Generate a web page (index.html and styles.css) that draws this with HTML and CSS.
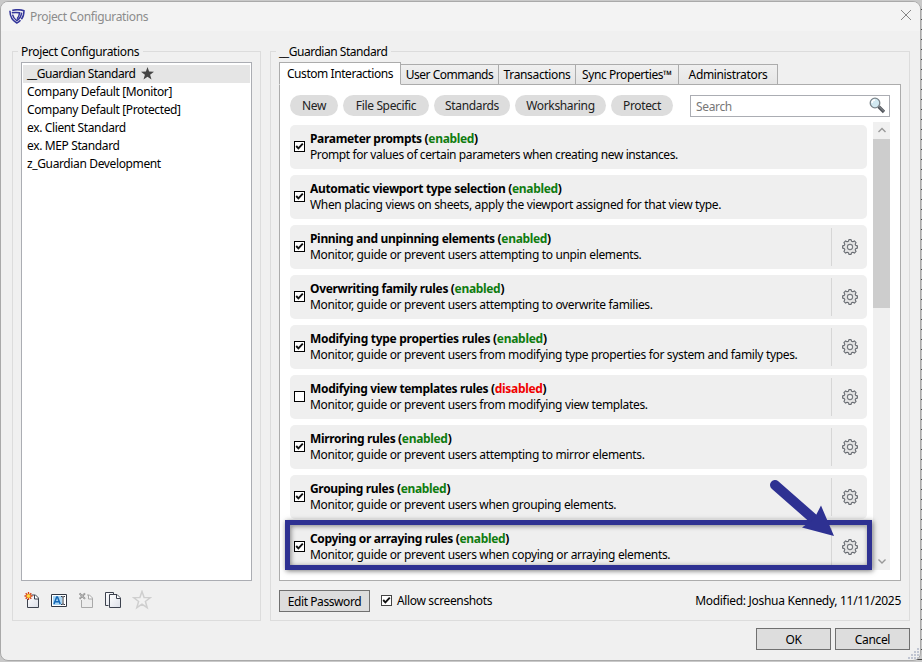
FILE: index.html
```html
<!DOCTYPE html>
<html lang="en">
<head>
<meta charset="utf-8">
<title>Project Configurations</title>
<link rel="stylesheet" href="styles.css">
</head>
<body>
<svg class="defs" width="0" height="0">
  <defs>
    <linearGradient id="paper" x1="0" y1="0" x2="1" y2="1"><stop offset="0" stop-color="#fff"/><stop offset="1" stop-color="#dcdfe8"/></linearGradient>
    <symbol id="gear" viewBox="0 0 16 16">
      <path d="M6.4 2.3 6.9.6h2.2l.5 1.7 1.2.5 1.6-.9 1.7 1.7-.9 1.6.5 1.2 1.7.5v2.2l-1.7.5-.5 1.2.9 1.6-1.7 1.7-1.6-.9-1.2.5-.5 1.7H6.9l-.5-1.7-1.2-.5-1.6.9-1.7-1.7.9-1.6-.5-1.2L.6 9.1V6.9l1.7-.5.5-1.2-.9-1.6 1.7-1.7 1.6.9z" fill="#e4e4e4" stroke="#696d73" stroke-width="1.1" stroke-linejoin="round"/>
      <circle cx="8" cy="8" r="2.6" fill="#f3f3f3" stroke="#777b80" stroke-width="1.1"/>
    </symbol>
    <symbol id="tick" viewBox="0 0 9 9"><path d="M1.200 4 3.400 6.300 7.800 1.700" fill="none" stroke="#111" stroke-width="1.900"/></symbol>
  </defs>
</svg>
<main class="window">
  <header class="titlebar">
    <svg class="logo" width="16" height="15" viewBox="0 0 16 15"><g fill="none" stroke="#34369a" stroke-width="1.500"><path d="M3.200 1.500C6 .6 11 .5 15 1.700c0 3.500-.8 6.300-2.600 8.600"/><path d="M.9 1.800C1 6.800 3 11.500 7.800 14c1.500-.7 2.700-1.700 3.700-2.800"/><path d="M2.800 3.800c2.700-.5 5.300-.5 7.800 0-.2 2.300-1 4.300-2.500 6"/><path d="M3.500 5.700c.5 2.200 2 4.400 4.300 5.900 2.700-1.900 4.500-4.500 4.800-8"/></g></svg>
    <span class="caption">Project Configurations</span>
    <svg class="close" width="12" height="12" viewBox="0 0 12 12"><path d="M1 1l10 10M11 1 1 11" stroke="#858585" fill="none"/></svg>
  </header>
  <div class="columns">
    <section class="group group-list">
      <h2 class="legend">Project Configurations</h2>
      <ul class="list">
        <li class="selected"><span>__Guardian Standard</span><svg width="13" height="13" viewBox="0 0 13 13"><path d="M6.500 0 8.100 4.600 13 4.700 9.100 7.700 10.500 12.500 6.500 9.700 2.500 12.500 3.900 7.700 0 4.700 4.900 4.600z" fill="#454545"/></svg></li>
        <li><span>Company Default [Monitor]</span></li>
        <li><span>Company Default [Protected]</span></li>
        <li><span>ex. Client Standard</span></li>
        <li><span>ex. MEP Standard</span></li>
        <li><span>z_Guardian Development</span></li>
      </ul>
      <div class="tools">
        <svg width="16" height="17" viewBox="0 0 16 17"><path d="M3.500 7v8.500h11V6l-3-3H7.500" fill="url(#paper)" stroke="#3d424e"/><path d="M10.500 3v4h4" fill="#fff" stroke="#3d424e"/><path d="M4.500 0v8M.5 4h8M1.700 1.200l5.600 5.600M7.300 1.200 1.700 6.800" stroke="#d43a16" stroke-width="1.300"/><circle cx="4.500" cy="4" r="1.900" fill="#ffe04a" stroke="#ec941c" stroke-width=".7"/></svg>
        <svg width="16" height="17" viewBox="0 0 16 17"><path d="M.5 2.500h15v12H.5z" fill="#fff" stroke="#303642"/><path d="M2 4h9v9H2z" fill="#a8d5f4"/><path d="m3 12 2.700-7h.8l2.700 7M4 9.800h4.200" fill="none" stroke="#1667b3" stroke-width="1.500"/><path d="M10 4.500h1.200l.8.700.8-.7H14M10 12.500h1.200l.8-.7.800.7H14M12 5v7" fill="none" stroke="#303642"/></svg>
        <svg width="16" height="17" viewBox="0 0 16 17"><path d="M3.500 8v7.500h11V6l-3-3H9" fill="#ededed" stroke="#a9a9a9"/><path d="M10.500 3v4h4" fill="#f6f6f6" stroke="#a9a9a9"/><path d="m1.500 1.300 5.500 5.500M7 1.300 1.500 6.800" stroke="#888" stroke-width="1.900"/><path d="m1.500 1.300 5.500 5.500M7 1.300 1.500 6.800" stroke="#ddd" stroke-width=".6"/></svg>
        <svg width="16" height="17" viewBox="0 0 16 17"><path d="M3.500 13.500h-3V.5h8v2" fill="url(#paper)" stroke="#3d424e"/><path d="M4.500 2.500h7.500l3.500 3.500v9.500h-11z" fill="url(#paper)" stroke="#3d424e"/><path d="M11.500 3v3.500h4" fill="#fff" stroke="#3d424e"/></svg>
        <svg class="star" width="20" height="20" viewBox="0 0 20 20"><path d="m10 1.500 2.100 6 6.200.1-4.900 3.900 1.800 6.200L10 14.200l-5.200 3.500 1.800-6.200-4.900-3.900 6.200-.1z" fill="#f2f2f2" stroke="#cfcfcf" stroke-width="1.500"/></svg>
      </div>
    </section>
    <section class="group group-detail">
      <h2 class="legend legend-tight">__Guardian Standard</h2>
      <nav class="tabs">
        <span class="tab tab-active">Custom Interactions</span>
        <span class="tab tab-commands">User Commands</span>
        <span class="tab tab-transactions">Transactions</span>
        <span class="tab tab-sync">Sync Properties™</span>
        <span class="tab tab-admin">Administrators</span>
      </nav>
      <div class="panel">
        <div class="filters">
          <span class="pill pill-new">New</span>
          <span class="pill pill-file">File Specific</span>
          <span class="pill pill-standards">Standards</span>
          <span class="pill pill-work">Worksharing</span>
          <span class="pill pill-protect">Protect</span>
          <div class="search"><span>Search</span><svg width="17" height="17" viewBox="0 0 17 17"><path d="m9.500 9.500 5.500 5.500" stroke="#50545a" stroke-width="3.200"/><path d="m9.500 9 5.500 5.500" stroke="#9ba0a5" stroke-width=".9"/><circle cx="6" cy="6" r="4.800" fill="#d2e9f1" stroke="#7b858b" stroke-width="1.300"/><path d="M3 6a3 3 0 0 1 3-3" fill="none" stroke="#fff" stroke-width="1.400"/></svg></div>
        </div>
        <div class="scroller">
          <div class="rules">
            <article class="rule"><i class="box"><svg><use href="#tick"/></svg></i><div class="copy"><h3>Parameter prompts (<em>enabled</em>)</h3><p class="tight">Prompt for values of certain parameters when creating new instances.</p></div></article>
            <article class="rule"><i class="box"><svg><use href="#tick"/></svg></i><div class="copy"><h3>Automatic viewport type selection (<em>enabled</em>)</h3><p>When placing views on sheets, apply the viewport assigned for that view type.</p></div></article>
            <article class="rule"><i class="box"><svg><use href="#tick"/></svg></i><div class="copy"><h3>Pinning and unpinning elements (<em>enabled</em>)</h3><p>Monitor, guide or prevent users attempting to unpin elements.</p></div><div class="settings"><svg><use href="#gear"/></svg></div></article>
            <article class="rule"><i class="box"><svg><use href="#tick"/></svg></i><div class="copy"><h3>Overwriting family rules (<em>enabled</em>)</h3><p>Monitor, guide or prevent users attempting to overwrite families.</p></div><div class="settings"><svg><use href="#gear"/></svg></div></article>
            <article class="rule"><i class="box"><svg><use href="#tick"/></svg></i><div class="copy"><h3 class="loose">Modifying type properties rules (<em>enabled</em>)</h3><p>Monitor, guide or prevent users from modifying type properties for system and family types.</p></div><div class="settings"><svg><use href="#gear"/></svg></div></article>
            <article class="rule"><i class="box"></i><div class="copy"><h3>Modifying view templates rules (<em class="off">disabled</em>)</h3><p>Monitor, guide or prevent users from modifying view templates.</p></div><div class="settings"><svg><use href="#gear"/></svg></div></article>
            <article class="rule"><i class="box"><svg><use href="#tick"/></svg></i><div class="copy"><h3>Mirroring rules (<em>enabled</em>)</h3><p>Monitor, guide or prevent users attempting to mirror elements.</p></div><div class="settings"><svg><use href="#gear"/></svg></div></article>
            <article class="rule"><i class="box"><svg><use href="#tick"/></svg></i><div class="copy"><h3>Grouping rules (<em>enabled</em>)</h3><p>Monitor, guide or prevent users when grouping elements.</p></div><div class="settings"><svg><use href="#gear"/></svg></div></article>
            <article class="rule marked"><i class="box"><svg><use href="#tick"/></svg></i><div class="copy"><h3>Copying or arraying rules (<em>enabled</em>)</h3><p>Monitor, guide or prevent users when copying or arraying elements.</p></div><div class="settings"><svg><use href="#gear"/></svg></div>
              <div class="highlight"></div>
              <svg class="arrow" viewBox="0 0 70 62"><path d="M7 10 48 46" stroke="#2e3192" stroke-width="10" stroke-linecap="round"/><path d="M66 61 34 52.500l12-8.500 7-13.500z" fill="#2e3192"/></svg>
            </article>
          </div>
          <div class="scrollbar"><svg width="17" height="17" viewBox="0 0 17 17"><path d="m5.500 10 3.500-3.500 3.500 3.500" fill="none" stroke="#999" stroke-width="1.400"/></svg><div class="thumb"></div><svg class="down" width="17" height="17" viewBox="0 0 17 17"><path d="m5.500 6.500 3.500 3.500 3.500-3.500" fill="none" stroke="#999" stroke-width="1.400"/></svg></div>
        </div>
      </div>
      <footer class="meta">
        <span class="button edit">Edit Password</span>
        <i class="box small"><svg><use href="#tick"/></svg></i>
        <span class="allow">Allow screenshots</span>
        <span class="modified">Modified: Joshua Kennedy, 11/11/2025</span>
      </footer>
    </section>
  </div>
  <div class="actions"><span class="button">OK</span><span class="button">Cancel</span></div>
  <svg class="grip" width="11" height="11" viewBox="0 0 11 11"><path d="M9 0h2v2H9zM6 3h2v2H6zM9 3h2v2H9zM3 6h2v2H3zM6 6h2v2H6zM9 6h2v2H9zM0 9h2v2H0zM3 9h2v2H3zM6 9h2v2H6zM9 9h2v2H9z" fill="#c0c5d1"/></svg>
</main>
</body>
</html>
```
FILE: styles.css
```css
* { box-sizing: border-box; }
body { margin: 0; width: 922px; height: 662px; overflow: hidden; padding: 1px 1px 1px 0; font: 12px/16px "Noto Sans", sans-serif; letter-spacing: -0.35px; color: #000; background: linear-gradient(90deg, #c9c9c9 0 50%, transparent 50%), repeating-linear-gradient(#c9c9c9 0 9px, #444 9px 10px); }
h2, h3, p, ul { margin: 0; padding: 0; font-size: inherit; font-weight: normal; white-space: nowrap; }
svg { display: block; flex: none; }
.defs { position: absolute; }
.window { position: relative; width: 921px; height: 660px; border: 1px solid #a9a9a9; border-radius: 8px; background: #f0f0f0; overflow: hidden; display: flex; flex-direction: column; }
.titlebar { height: 29px; flex: none; background: #f3f3f3; display: flex; align-items: center; padding: 0 8px; color: #8c8c8c; }
.caption { margin-left: 5px; }
.close { margin-left: auto; margin-top: -3px; }
.columns { display: flex; gap: 9px; padding: 20px 0 0 11px; }
.group { height: 570px; border: 1px solid #dcdcdc; padding: 0 8px; }
.group-list { width: 249px; }
.group-detail { width: 640px; }
.legend { width: max-content; height: 16px; margin: -8px 0 0 -3px; padding: 0 4px 0 3px; background: #f0f0f0; }
.legend-tight { letter-spacing: -0.47px; }
.list { height: 519px; margin-top: 2px; border: 1px solid #abadb3; background: #fff; padding: 2px 1px; list-style: none; }
.list li { height: 18px; padding-left: 4px; display: flex; align-items: center; letter-spacing: -0.37px; }
.list .selected { background: #e5e5e5; gap: 6px; letter-spacing: -0.47px; }
.selected svg { margin-top: -2px; }
.tools { display: flex; align-items: center; gap: 11px; height: 20px; margin: 9px 0 0 3px; }
.tabs { display: flex; align-items: flex-end; height: 22px; margin: 2px 0 0; }
.tab { height: 21px; border: 1px solid #acacac; border-left-width: 0; background: linear-gradient(#f0f0f0, #e5e5e5); text-align: center; line-height: 20px; white-space: nowrap; margin-bottom: -1px; }
.tab-active { position: relative; width: 122px; height: 23px; border-left-width: 1px; border-bottom-color: #fff; background: #fff; line-height: 22px; letter-spacing: -0.43px; }
.tab-commands { width: 98px; letter-spacing: -0.5px; }
.tab-transactions { width: 77px; }
.tab-sync { width: 103px; letter-spacing: -0.42px; }
.tab-admin { width: 99px; }
.panel { height: 497px; border: 1px solid #acacac; background: #fff; padding: 10px 10px; }
.filters { display: flex; gap: 5px; height: 22px; }
.pill { height: 21px; border-radius: 11px; background: #ddd; text-align: center; line-height: 21px; color: #222; }
.pill-new { width: 48px; }
.pill-file { width: 86px; }
.pill-standards { width: 76px; }
.pill-work { width: 91px; }
.pill-protect { width: 62px; }
.search { width: 200px; height: 22px; margin-left: auto; border: 1px solid #abadb3; display: flex; align-items: center; justify-content: space-between; padding: 1px 3px 0 5px; color: #777; }
.search svg { margin-top: -2px; }
.scroller { display: flex; justify-content: space-between; margin-top: 5px; height: 448px; }
.rules { width: 577px; padding-top: 3px; display: flex; flex-direction: column; gap: 6px; }
.rule { position: relative; height: 44px; flex: none; border-radius: 5px; background: #efefef; display: flex; align-items: center; padding-left: 4px; }
.box { width: 11px; height: 11px; flex: none; border: 1px solid #000; background: #fff; }
.rule .box { margin-bottom: 1px; }
.box svg { width: 9px; height: 9px; }
.copy { margin-left: 5px; }
.copy h3 { font-weight: 700; letter-spacing: -0.33px; }
.copy .loose { letter-spacing: -0.28px; }
.copy p { letter-spacing: -0.34px; }
.copy .tight { letter-spacing: -0.4px; }
.copy em { font-style: normal; color: #107c10; }
.copy .off { color: #f00000; }
.settings { width: 36px; height: 38px; margin-left: auto; border-left: 1px solid #d6d6d6; display: flex; align-items: center; padding-left: 10px; }
.settings svg { width: 16px; height: 16px; }
.highlight { position: absolute; left: -5px; top: -5px; width: 587px; height: 50px; border: 5px solid #2e3192; box-shadow: 1px 1px 5px #0008, inset 1px 1px 5px #0007; }
.arrow { position: absolute; left: 478px; top: -50px; width: 70px; height: 62px; fill: none; }
.scrollbar { width: 17px; height: 448px; background: #f0f0f0; display: flex; flex-direction: column; }
.thumb { height: 169px; background: #cdcdcd; }
.scrollbar .down { margin-top: auto; }
.meta { display: flex; align-items: center; height: 22px; margin-top: 9px; }
.button { width: 75px; height: 22px; border: 1px solid #707070; background: #ddd; text-align: center; line-height: 21px; }
.edit { width: 91px; letter-spacing: -0.42px; }
.small { margin: 0 0 1px 11px; border-color: #444; }
.allow { margin-left: 5px; }
.modified { margin-left: auto; letter-spacing: -0.29px; }
.actions { display: flex; justify-content: flex-end; gap: 4px; margin: 7px 10px 0 0; }
.grip { position: absolute; right: 1px; bottom: 1px; }
```
